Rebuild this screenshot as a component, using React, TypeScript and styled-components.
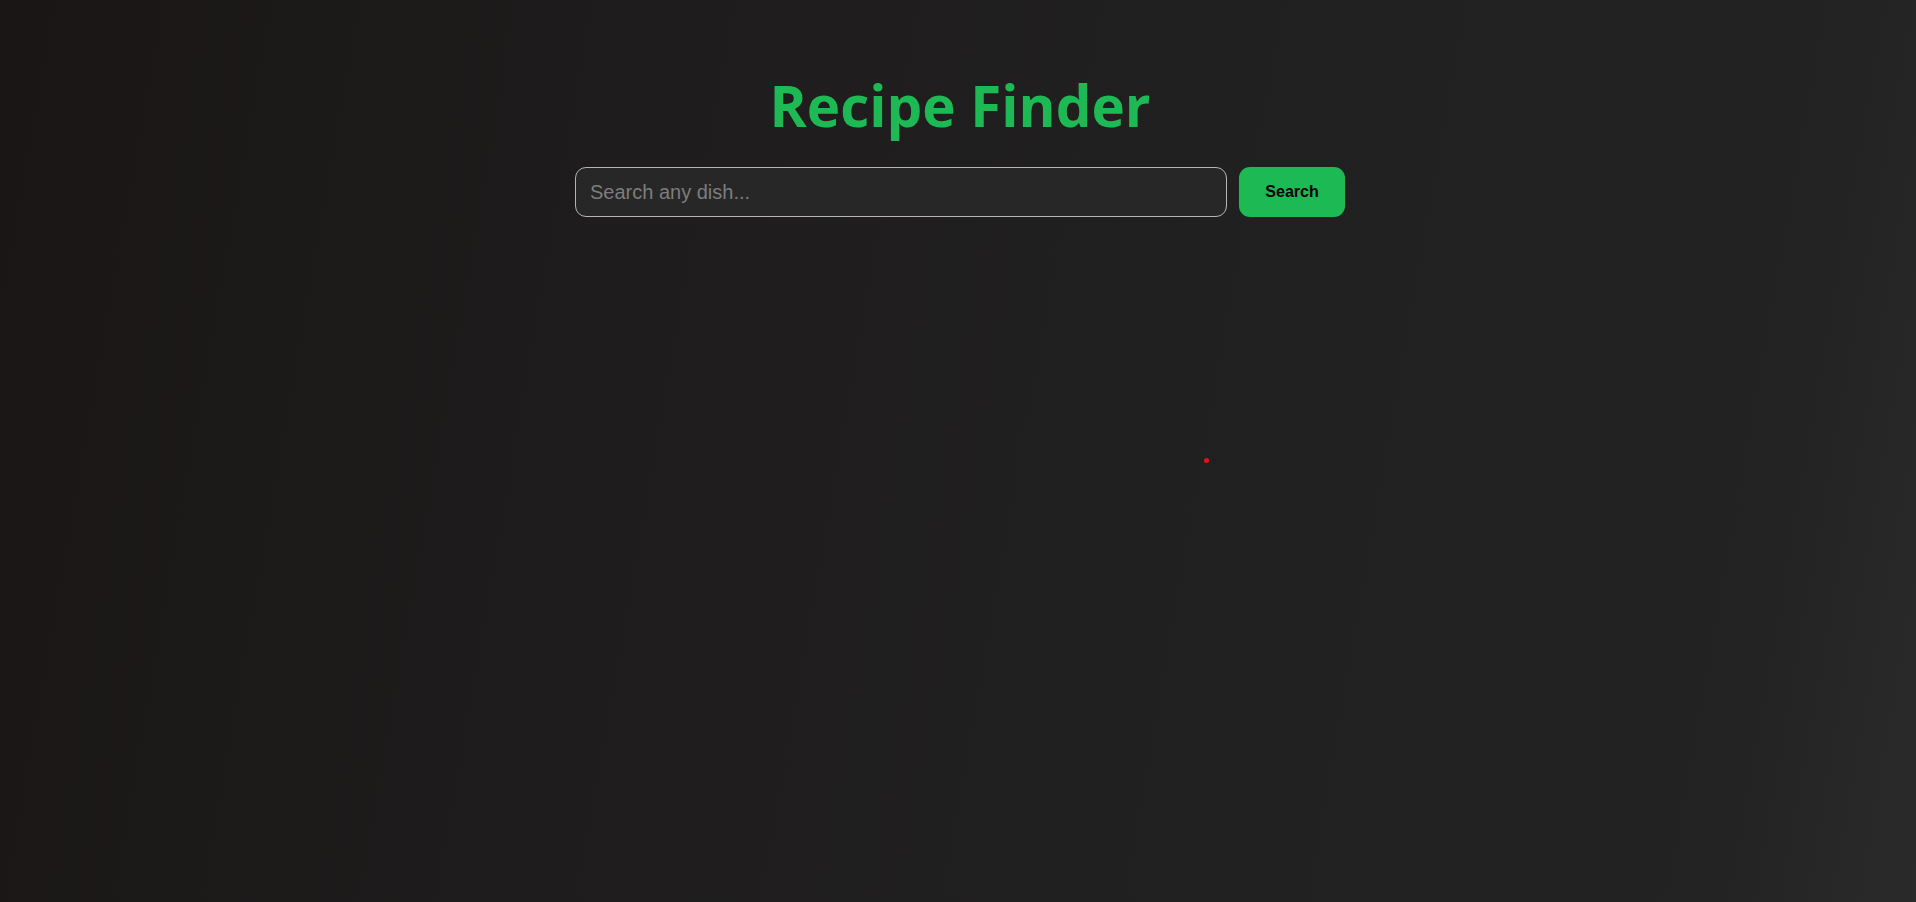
import React from "react";
import styled, { createGlobalStyle } from "styled-components";

const GlobalStyle = createGlobalStyle`
  html, body {
    margin: 0;
    padding: 0;
    height: 100%;
  }
  body {
    font-family: "Liberation Sans", Arial, sans-serif;
    background: #1f1e1e;
  }
  #root {
    min-height: 100vh;
  }
`;

const Page = styled.main`
  position: relative;
  min-height: 100vh;
  box-sizing: border-box;
  padding: 72px 0 0 4px;
  display: flex;
  flex-direction: column;
  align-items: center;
  background: linear-gradient(100deg, #191615 0%, #1e1c1c 30%, #212020 60%, #232323 90%, #2a2a2a 100%);
`;

const Title = styled.h1`
  margin: 0 0 28px;
  font-family: "Open Sans", "Noto Sans", sans-serif;
  font-weight: 700;
  font-size: 56.5px;
  line-height: 67px;
  color: #1db954;
  letter-spacing: 0;
`;

const SearchRow = styled.form`
  display: flex;
  gap: 12px;
  align-items: stretch;
`;

const SearchInput = styled.input`
  width: 652px;
  height: 50px;
  box-sizing: border-box;
  padding: 0 14px;
  border: 1px solid #b5b5b5;
  border-radius: 11px;
  background: #272727;
  color: #eee;
  font-family: "Liberation Sans", Arial, sans-serif;
  font-size: 20px;
  outline: none;
  &::placeholder {
    color: #7d7d7d;
  }
`;

const SearchButton = styled.button`
  height: 50px;
  width: 106px;
  box-sizing: border-box;
  border: none;
  border-radius: 11px;
  background: #1db954;
  color: #000;
  font-family: "Liberation Sans", Arial, sans-serif;
  font-weight: 700;
  font-size: 16px;
  cursor: pointer;
`;

const Dot = styled.span`
  position: absolute;
  left: 1204px;
  top: 458px;
  width: 5px;
  height: 5px;
  border-radius: 50%;
  background: #e81010;
`;

export default function App() {
  return (
    <>
      <GlobalStyle />
      <Page>
        <Title>Recipe Finder</Title>
        <SearchRow onSubmit={(e) => e.preventDefault()}>
          <SearchInput type="text" placeholder="Search any dish..." />
          <SearchButton type="submit">Search</SearchButton>
        </SearchRow>
        <Dot />
      </Page>
    </>
  );
}
